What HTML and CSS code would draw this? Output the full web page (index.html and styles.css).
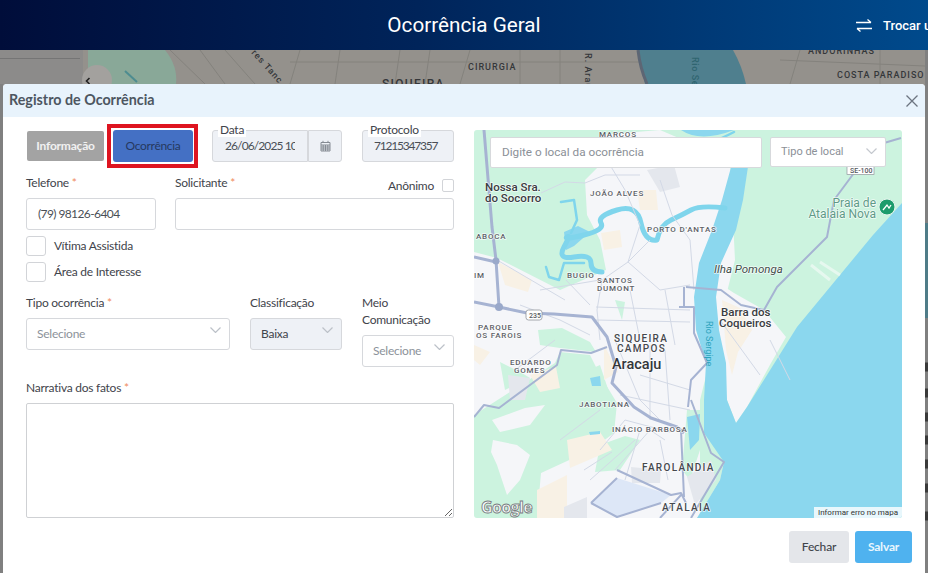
FILE: index.html
```html
<!DOCTYPE html>
<html lang="pt-BR">
<head>
<meta charset="utf-8">
<title>Ocorrência Geral</title>
<link rel="stylesheet" href="styles.css">
</head>
<body>
<header class="topbar">
  <div></div>
  <h1 class="topbar-title">Ocorrência Geral</h1>
  <div class="topbar-side">
    <svg class="swap-icon" viewBox="0 0 16 13" width="16" height="13"><path d="M0 3.500H15M11.500 .5l3.500 3M16 9.500H1M4.500 12.500l-3.500-3" fill="none" stroke="#fff" stroke-width="1.300"/></svg>
    <span class="swap-text">Trocar usuário</span>
  </div>
</header>

<main class="backdrop">
  <svg class="backdrop-map" viewBox="0 50 928 523" preserveAspectRatio="none">
    <rect x="0" y="50" width="928" height="523" fill="#94918c"/>
    <rect x="0" y="50" width="83" height="523" fill="#8c8b8a"/>
    <path d="M0 58.500H80" stroke="#757575" stroke-width="1"/>
    <path d="M88 50H165Q178 66 176 84H88Z" fill="#89a898"/>
    <path d="M125 71L137 82" stroke="#4d8c90" stroke-width="2"/>
    <path d="M200 50L225 84M225 50L255 84M170 50L205 84M300 50L290 84M340 50L335 84M400 50L395 84M430 50L425 84M460 84L470 50M520 50V84M560 50V84M290 62H640M780 60L925 66M800 50L790 84M880 50V84" stroke="#84827d" stroke-width="1" fill="none"/>
    <circle cx="97" cy="80" r="15" fill="#a3a19e"/>
    <path d="M89.500 78l-3 3 3 3" fill="none" stroke="#222" stroke-width="1.600"/>
    <text class="bd-label" transform="translate(251 53) rotate(48)">res Tanc</text>
    <text class="bd-label" x="468" y="70">CIRURGIA</text>
    <text class="bd-label big" x="382" y="88">SIQUEIRA</text>
    <text class="bd-label" transform="translate(585 53) rotate(90)">R. Araú</text>
    <path d="M638 50H733Q742 66 746 84H645Z" fill="#4f7f8e"/>
    <path d="M638 50Q640 68 647 84" fill="none" stroke="#5d6674" stroke-width="3"/>
    <text class="bd-label water" transform="translate(692 57) rotate(90)">Rio Se</text>
    <text class="bd-label" x="808" y="54">ANDORINHAS</text>
    <text class="bd-label" x="837" y="78">COSTA PARADISO</text>
    <rect x="925" y="50" width="3" height="523" fill="#808080"/>
    <rect x="925" y="223" width="3" height="95" fill="#4f7c88"/>
    <path d="M925 367h3M925 393h3M925 417h3M925 440h3M925 464h3M925 488h3M925 516h3" stroke="#3a3a3a" stroke-width="9"/>
    <rect x="0" y="84" width="3" height="489" fill="#808080"/>
  </svg>

  <section class="modal">
    <div class="modal-head">
      <h2 class="modal-title">Registro de Ocorrência</h2>
      <svg class="close-icon" viewBox="0 0 12 12" width="12" height="12"><path d="M.5 .5l11 11M11.500 .5l-11 11" stroke="#6c7480" stroke-width="1.300"/></svg>
    </div>
    <div class="modal-body">
      <form class="form">
        <div class="row-top">
          <div class="tabs">
            <button type="button" class="tab tab-off">Informação</button>
            <button type="button" class="tab tab-on">Ocorrência</button>
          </div>
          <div class="legend-field date-field">
            <span class="legend">Data</span>
            <input class="input disabled date-input" value="26/06/2025 10:32" readonly>
            <span class="date-addon">
              <svg viewBox="0 0 11 12" width="11" height="12"><path d="M1 2.500H10V11H1ZM1 5H10M1 7H10M1 9H10M3.200 5V11M5.500 5V11M7.800 5V11M3 .8V2.500M8 .8V2.500" fill="none" stroke="#858b93" stroke-width="1"/></svg>
            </span>
          </div>
          <div class="legend-field proto-field">
            <span class="legend">Protocolo</span>
            <input class="input disabled proto-input" value="71215347357" readonly>
          </div>
        </div>

        <div class="row-contact">
          <div class="field">
            <label class="label">Telefone <b>*</b></label>
            <input class="input phone-input" value="(79) 98126-6404">
          </div>
          <div class="field">
            <div class="label-split">
              <label class="label">Solicitante <b>*</b></label>
              <span class="anon"><span>Anônimo</span><input type="checkbox" class="check small"></span>
            </div>
            <input class="input">
          </div>
        </div>

        <div class="checks">
          <label class="check-row"><input type="checkbox" class="check"><span class="check-text">Vítima Assistida</span></label>
          <label class="check-row"><input type="checkbox" class="check"><span class="check-text">Área de Interesse</span></label>
        </div>

        <div class="row-selects">
          <div class="field">
            <label class="label">Tipo ocorrência <b>*</b></label>
            <div class="select"><span class="placeholder">Selecione</span>
              <svg class="chev" viewBox="0 0 11 6" width="11" height="6"><path d="M.5 .5l5 5 5-5" fill="none" stroke="#bcc1c8" stroke-width="1.200"/></svg></div>
          </div>
          <div class="field">
            <label class="label">Classificação</label>
            <div class="select disabled"><span>Baixa</span>
              <svg class="chev" viewBox="0 0 11 6" width="11" height="6"><path d="M.5 .5l5 5 5-5" fill="none" stroke="#bcc1c8" stroke-width="1.200"/></svg></div>
          </div>
          <div class="field">
            <label class="label">Meio Comunicação</label>
            <div class="select"><span class="placeholder">Selecione</span>
              <svg class="chev" viewBox="0 0 11 6" width="11" height="6"><path d="M.5 .5l5 5 5-5" fill="none" stroke="#bcc1c8" stroke-width="1.200"/></svg></div>
          </div>
        </div>

        <div class="field narrative">
          <label class="label">Narrativa dos fatos <b>*</b></label>
          <textarea class="textarea"></textarea>
        </div>
      </form>

      <div class="map">
        <svg class="map-svg" viewBox="474 130 428 388">
          <rect x="474" y="130" width="428" height="388" fill="#ccf3df"/>
          <path class="urban" d="M474 252L497 258L560 290L606 270L600 240L587 215L585 180L600 165L600 135L660 130L730 160L735 260L700 400L700 518L537 518L541 473L591 450L614 433L617 403L600 375L590 355L560 352L555 363L474 415L474 300Z"/>
          <path class="urban" d="M714 280L734 293L764 310L786 337L771 363L747 407L736 423L727 400L724 390L716 297Z"/>
          <path class="urban" d="M493 440L517 445L530 455L520 480L507 495L497 465L491 452ZM492 420L525 408L545 405L530 425L500 432Z"/>
          <path class="green" d="M584 372L600 365L610 395L598 405L586 395ZM538 330L562 328L590 342L596 352L560 348L540 345ZM600 445L625 436L640 440L620 470L595 472ZM500 362L520 372L530 378L505 390Z"/>
          <path class="green" d="M687 410L700 410L700 450L690 480L682 470ZM615 300L625 302L622 320Z"/>
          <path class="sand" d="M637 190L656 190L658 210L640 210ZM601 233L620 230L622 247L604 250ZM537 490L567 475L567 518L537 518ZM567 440L600 432L612 450L570 468ZM530 375L556 367L560 388L540 392ZM604 345L618 372L604 380Z"/>
          <path class="sand" d="M722 300L740 308L752 330L738 352L732 375L726 350ZM724 462L734 478L722 500L705 518L697 518L720 480Z"/>
          <path class="sand" d="M498 262L532 280L528 292L505 285ZM474 345L490 352L480 365L474 360Z"/>
          <path class="dense" d="M647 170L674 165L680 187L660 192ZM631 467L661 470L660 483L632 483ZM687 477L711 460L716 480L695 505ZM564 507L587 497L587 518L564 518ZM508 375L530 378L525 400L510 400Z"/>
          <path d="M591 503L617 478L671 495L661 503L617 517Z" fill="#dde7f7"/>
          <path class="water" d="M681 130Q700 143 734 130ZM733 160L749 160L743 200L736 230L721 263L716 297L719 330L726 363L727 400L736 423L747 407L797 327L873 235L902 203V518H697L720 480L724 462L704 433L704 400L706 363L696 330L694 297L699 263L712 230L722 200Z"/>
          <path class="water" d="M687 417L700 414L699 440L690 450ZM590 378L600 376L601 386L592 386ZM589 432L600 431L600 434L590 435ZM564 232L578 226L590 232L574 246L566 250Z"/>
          <path class="creek" d="M725 208Q700 205 691 210T671 220T657 240Q645 242 641 223T617 210T601 223T584 235T567 237T564 247T574 257T591 263T602 272"/>
          <path class="creek thin" d="M561 202L574 200L577 220L571 233M546 267L549 277L559 280L564 263L584 263M683 145Q700 150 734 132"/>
          <path class="minor" d="M541 193L565 182L585 183L605 175L640 175M610 165L625 190L640 225L628 262L602 280L597 310L600 340M660 180L672 215L690 240L694 290M650 240L628 262L660 290L690 285M596 307L690 310M596 320L690 322M630 290L640 340M665 290L675 345M615 340L640 400L660 420M650 345L650 420M665 350L670 420M640 375L690 390M620 395L690 410M600 450L625 420L670 432M615 470L650 430L665 440M584 470L612 452M590 480L635 440M515 370L555 340M520 305L560 320L590 335M497 260L565 300M540 290L600 280M566 280L590 305M770 340L790 380M720 320L760 375M660 440L668 480M640 430L625 480M560 440L600 410"/>
          <path class="road wide" d="M484 130L492 227L496 260L499 307M474 257L496 262M474 302L499 307L527 313L554 314L592 317L607 337L616 367L612 383L634 407L651 418L677 427L684 433"/>
          <path class="road" d="M474 417L484 405L499 408L557 365L561 350L591 353L607 347M684 287V307M679 307H694V333L707 363L691 380L688 407M686 287L721 290L741 305L764 310L777 287L827 237L834 200L854 173M884 143L901 138M691 400L711 453L724 462L691 518M681 430L684 497M617 470L671 495L681 493L686 503M591 503L617 478M591 503L617 517L661 503M660 518L681 495"/>
          <circle cx="496" cy="261" r="3.500" fill="#9aa9ca"/>
          <circle cx="499" cy="307" r="4" fill="#9aa9ca"/>
          <path d="M811 265L830 280M820 262L840 275" stroke="#e6f8ef" stroke-width="3"/>

          <text class="t area" x="599" y="137">MARCOS</text>
          <text class="t city" x="485" y="191">Nossa Sra.</text>
          <text class="t city" x="485" y="202">do Socorro</text>
          <text class="t area" x="590" y="196">JOÃO ALVES</text>
          <text class="t area" x="647" y="232">PORTO D'ANTAS</text>
          <text class="t area" x="476" y="239">ABOCA</text>
          <text class="t area" x="474" y="278">IM</text>
          <text class="t area" x="567" y="278">BUGIO</text>
          <text class="t area" x="597" y="283">SANTOS</text>
          <text class="t area" x="597" y="291">DUMONT</text>
          <text class="t area" x="478" y="330">PARQUE</text>
          <text class="t area" x="476" y="338">OS FAROIS</text>
          <text class="t area" x="510" y="365">EDUARDO</text>
          <text class="t area" x="514" y="373">GOMES</text>
          <text class="t area lg" x="614" y="342">SIQUEIRA</text>
          <text class="t area lg" x="617" y="352">CAMPOS</text>
          <text class="t capital" x="612" y="369">Aracaju</text>
          <text class="t area" x="579" y="407">JABOTIANA</text>
          <text class="t area" x="612" y="432">INÁCIO BARBOSA</text>
          <text class="t area lg" x="642" y="471">FAROLÂNDIA</text>
          <text class="t area lg" x="662" y="511">ATALAIA</text>
          <text class="t island" x="714" y="273">Ilha Pomonga</text>
          <text class="t city" x="721" y="316">Barra dos</text>
          <text class="t city" x="719" y="327">Coqueiros</text>
          <text class="t river" transform="translate(706 321) rotate(90)">Rio Sergipe</text>
          <text class="t poi" x="876" y="207">Praia de</text>
          <text class="t poi" x="876" y="218">Atalaia Nova</text>
          <circle cx="887" cy="207" r="8" fill="#1d9c6c" stroke="#e8f5ef" stroke-width="1"/>
          <path d="M883 210l4-5 2 3 2-3" fill="none" stroke="#fff" stroke-width="1.300"/>
          <rect x="847" y="166" width="27" height="8.500" fill="#fff" stroke="#8f949b" stroke-width=".7"/>
          <text class="shield" x="850" y="173">SE-100</text>
          <rect x="526" y="310" width="16" height="10" rx="2.500" fill="#fff" stroke="#8f949b" stroke-width=".8"/>
          <text class="shield" x="529" y="318">235</text>
          <text class="google" x="481" y="513">Google</text>
        </svg>
        <div class="map-search">Digite o local da ocorrência</div>
        <div class="map-type"><span>Tipo de local</span>
          <svg class="chev" viewBox="0 0 11 6" width="11" height="6"><path d="M.5 .5l5 5 5-5" fill="none" stroke="#c4c8ce" stroke-width="1.200"/></svg></div>
        <div class="map-report">Informar erro no mapa</div>
      </div>
    </div>
    <div class="modal-foot">
      <button type="button" class="btn btn-close">Fechar</button>
      <button type="button" class="btn btn-save">Salvar</button>
    </div>
  </section>
</main>
</body>
</html>
```
FILE: styles.css
```css
* { box-sizing: border-box; }
html, body { margin: 0; height: 100%; }
body {
  width: 928px;
  height: 573px;
  overflow: hidden;
  display: flex;
  flex-direction: column;
  font-family: "Lato", "Noto Sans", sans-serif;
  font-size: 12px;
  letter-spacing: -.25px;
  color: #3f444b;
}

.topbar {
  height: 50px;
  flex: none;
  display: grid;
  grid-template-columns: 387px 154px 387px;
  align-items: center;
  color: #fff;
  background: linear-gradient(90deg, #000d3a 0%, #00245a 45%, #004a8c 100%);
  font-family: "Roboto", sans-serif;
  letter-spacing: 0;
  overflow: hidden;
}
.topbar-title { margin: 0; font-size: 20.7px; font-weight: 400; white-space: nowrap; text-align: center; }
.topbar-side {
  display: flex;
  align-items: center;
  gap: 11px;
  padding-left: 315px;
  font-size: 13px;
  font-weight: 500;
  white-space: nowrap;
}
.swap-icon, .swap-text { flex: none; }

.backdrop { position: relative; flex: 1; overflow: hidden; }
.backdrop-map { display: block; width: 100%; height: 100%; }
.bd-label { font: 500 9px "Roboto", sans-serif; letter-spacing: 1px; fill: #35373a; }
.bd-label.big { font-size: 12px; letter-spacing: 1.300px; }
.bd-label.water { fill: #2f6570; letter-spacing: .6px; }

.modal {
  position: absolute;
  left: 3px;
  top: 34px;
  width: 922px;
  height: 489px;
  background: #fff;
  border-radius: 4px 4px 0 0;
  display: flex;
  flex-direction: column;
}
.modal-head {
  height: 33px;
  flex: none;
  display: flex;
  align-items: center;
  justify-content: space-between;
  padding: 0 7px 0 6px;
  background: #e8f3fc;
  border-radius: 4px 4px 0 0;
}
.modal-title { margin: 0 0 2px; font-size: 14.3px; font-weight: 700; letter-spacing: 0; color: #4d5661; }

.modal-body {
  flex: none;
  display: grid;
  grid-template-columns: 428px 428px;
  gap: 20px;
  padding: 13px 23px 0;
}
.form { display: flex; flex-direction: column; }

.row-top { display: flex; height: 32px; }
.tabs { display: flex; align-items: center; gap: 9px; width: 186px; padding-left: 1px; }
.tab {
  border: 0;
  border-radius: 2px;
  font: 700 12px "Lato", sans-serif;
  letter-spacing: -.2px;
  padding: 0 0 2px;
}
.tab-off { width: 77px; height: 30px; background: #a3a3a3; color: #f1f1f1; }
.tab-on {
  position: relative;
  width: 80px;
  height: 32px;
  background: #4470c4;
  color: #26395f;
  font-weight: 400;
  letter-spacing: -.3px;
  border-radius: 3px;
}
.tab-on::after {
  content: "";
  position: absolute;
  inset: -6px -5px -6px -6px;
  border: 4px solid #de1420;
}
.legend-field { position: relative; display: flex; }
.date-field { width: 130px; margin-right: 20px; }
.proto-field { width: 92px; }
.legend {
  position: absolute;
  left: 6px;
  top: -7px;
  padding: 0 2px;
  background: #fff;
  line-height: 14px;
  z-index: 1;
}
.input {
  height: 32px;
  width: 100%;
  min-width: 0;
  border: 1px solid #d6d8dc;
  border-radius: 3px;
  padding: 0 11px 2px;
  font: 12px "Lato", sans-serif;
  color: #4a4f56;
  background: #fff;
  outline: 0;
}
.disabled { background: #eef1f6; }
.date-input { width: 96px; border-radius: 3px 0 0 3px; padding: 0 12px 2px 12px; letter-spacing: -.9px; }
.date-addon {
  width: 34px;
  height: 32px;
  display: flex;
  align-items: center;
  justify-content: center;
  background: #eef1f6;
  border: 1px solid #d6d8dc;
  border-left-width: 1px;
  border-radius: 0 3px 3px 0;
}
.proto-input { padding: 0 4px 2px 11px; letter-spacing: -1.2px; }
.phone-input { letter-spacing: -.6px; }

.row-contact { display: grid; grid-template-columns: 130px 279px; gap: 19px; margin-top: 13px; }
.field { display: flex; flex-direction: column; min-width: 0; }
.label { line-height: 15px; margin-bottom: 8px; display: block; }
.label b { color: #f08a5d; font-weight: 400; }
.label-split { display: flex; justify-content: space-between; align-items: flex-start; height: 23px; }
.anon { display: flex; align-items: center; gap: 8px; margin-top: 4px; height: 13px; }
.anon span { margin-top: -1px; }
.check {
  appearance: none;
  margin: 0;
  width: 20px;
  height: 20px;
  border: 1px solid #d2d4d8;
  border-radius: 3px;
  background: #fff;
  flex: none;
}
.check.small { width: 12px; height: 13px; border-radius: 2px; }
.checks { display: flex; flex-direction: column; gap: 6px; margin-top: 6px; }
.check-row { display: flex; align-items: center; gap: 8px; height: 20px; }
.check-text { margin-bottom: 1px; }

.row-selects { display: grid; grid-template-columns: 204px 92px 92px; gap: 20px; margin-top: 12px; align-items: start; }
.row-selects .label { line-height: 17px; margin-bottom: 7px; }
.select {
  height: 32px;
  border: 1px solid #d6d8dc;
  border-radius: 3px;
  display: flex;
  align-items: center;
  justify-content: space-between;
  padding: 0 8px 2px 10px;
}
.select .chev { margin-top: -6px; }
.placeholder { color: #8c929a; }

.narrative { margin-top: 13px; }
.narrative .label { line-height: 16px; margin-bottom: 7px; }
.textarea {
  width: 428px;
  height: 115px;
  display: block;
  border: 1px solid #cfd1d4;
  border-radius: 2px;
  outline: 0;
  margin: 0;
}

.map { position: relative; width: 428px; height: 388px; border-radius: 3px; overflow: hidden; letter-spacing: 0; }
.map-svg { display: block; width: 428px; height: 388px; }
.urban { fill: #f5f6f9; }
.green { fill: #ccf3df; }
.sand { fill: #f8f1e5; }
.dense { fill: #e4e7ed; }
.water { fill: #8bd7ee; }
.creek { fill: none; stroke: #7fd5ec; stroke-width: 5; stroke-linejoin: round; stroke-linecap: round; }
.creek.thin { stroke-width: 2.500; }
.minor { fill: none; stroke: #d3d9e6; stroke-width: 1; }
.road { fill: none; stroke: #a6b3d2; stroke-width: 2; stroke-linejoin: round; }
.road.wide { stroke-width: 3; }
.t {
  font-family: "Roboto", sans-serif;
  paint-order: stroke;
  stroke: rgba(255, 255, 255, .75);
  stroke-width: 1.500px;
  stroke-linejoin: round;
}
.area { font-size: 8px; font-weight: 500; letter-spacing: .8px; fill: #5d6167; }
.area.lg { font-size: 10px; letter-spacing: 1.300px; fill: #45484d; }
.city { font-size: 11.5px; font-weight: 500; fill: #3a3d42; }
.capital { font-size: 14.5px; font-weight: 500; fill: #33363a; }
.island { font-size: 11.5px; font-style: italic; fill: #3f4d4a; }
.river { font-size: 9px; fill: #2ba3bd; stroke: none; }
.poi { font-size: 12px; fill: #5f9a87; text-anchor: end; }
.shield { font: 500 7px "Roboto", sans-serif; fill: #55595e; }
.google {
  font: 700 16px "Open Sans", sans-serif;
  letter-spacing: -.6px;
  fill: #fff;
  stroke: #7b7f83;
  stroke-width: .9px;
}
.map-search {
  position: absolute;
  left: 16px;
  top: 7px;
  width: 272px;
  height: 31px;
  display: flex;
  align-items: center;
  padding: 0 0 1px 11px;
  background: #fff;
  border: 1px solid #d7d9dc;
  border-radius: 2px;
  font: 11.75px "Roboto", sans-serif;
  color: #8b9097;
}
.map-type {
  position: absolute;
  left: 296px;
  top: 7px;
  width: 116px;
  height: 30px;
  display: flex;
  align-items: center;
  justify-content: space-between;
  padding: 0 8px 2px 10px;
  background: #fff;
  border: 1px solid #d7d9dc;
  border-radius: 2px;
  font: 11px "Roboto", sans-serif;
  color: #8b9097;
}
.map-report {
  position: absolute;
  right: 0;
  bottom: 0;
  width: 88px;
  height: 11px;
  text-align: center;
  background: rgba(255, 255, 255, .8);
  font: 8px/11px "Roboto", sans-serif;
  color: #333;
  white-space: nowrap;
}

.modal-foot { display: flex; justify-content: flex-end; gap: 6px; margin-top: 13px; padding-right: 13px; }
.btn { height: 32px; border: 0; border-radius: 3px; font: 500 12px "Lato", sans-serif; letter-spacing: -.2px; padding: 0 0 2px; }
.btn-close { width: 60px; background: #e4e6ea; color: #3f444b; }
.btn-save { width: 57px; background: #4fb2ef; color: #e9f6fe; font-weight: 700; }
```
